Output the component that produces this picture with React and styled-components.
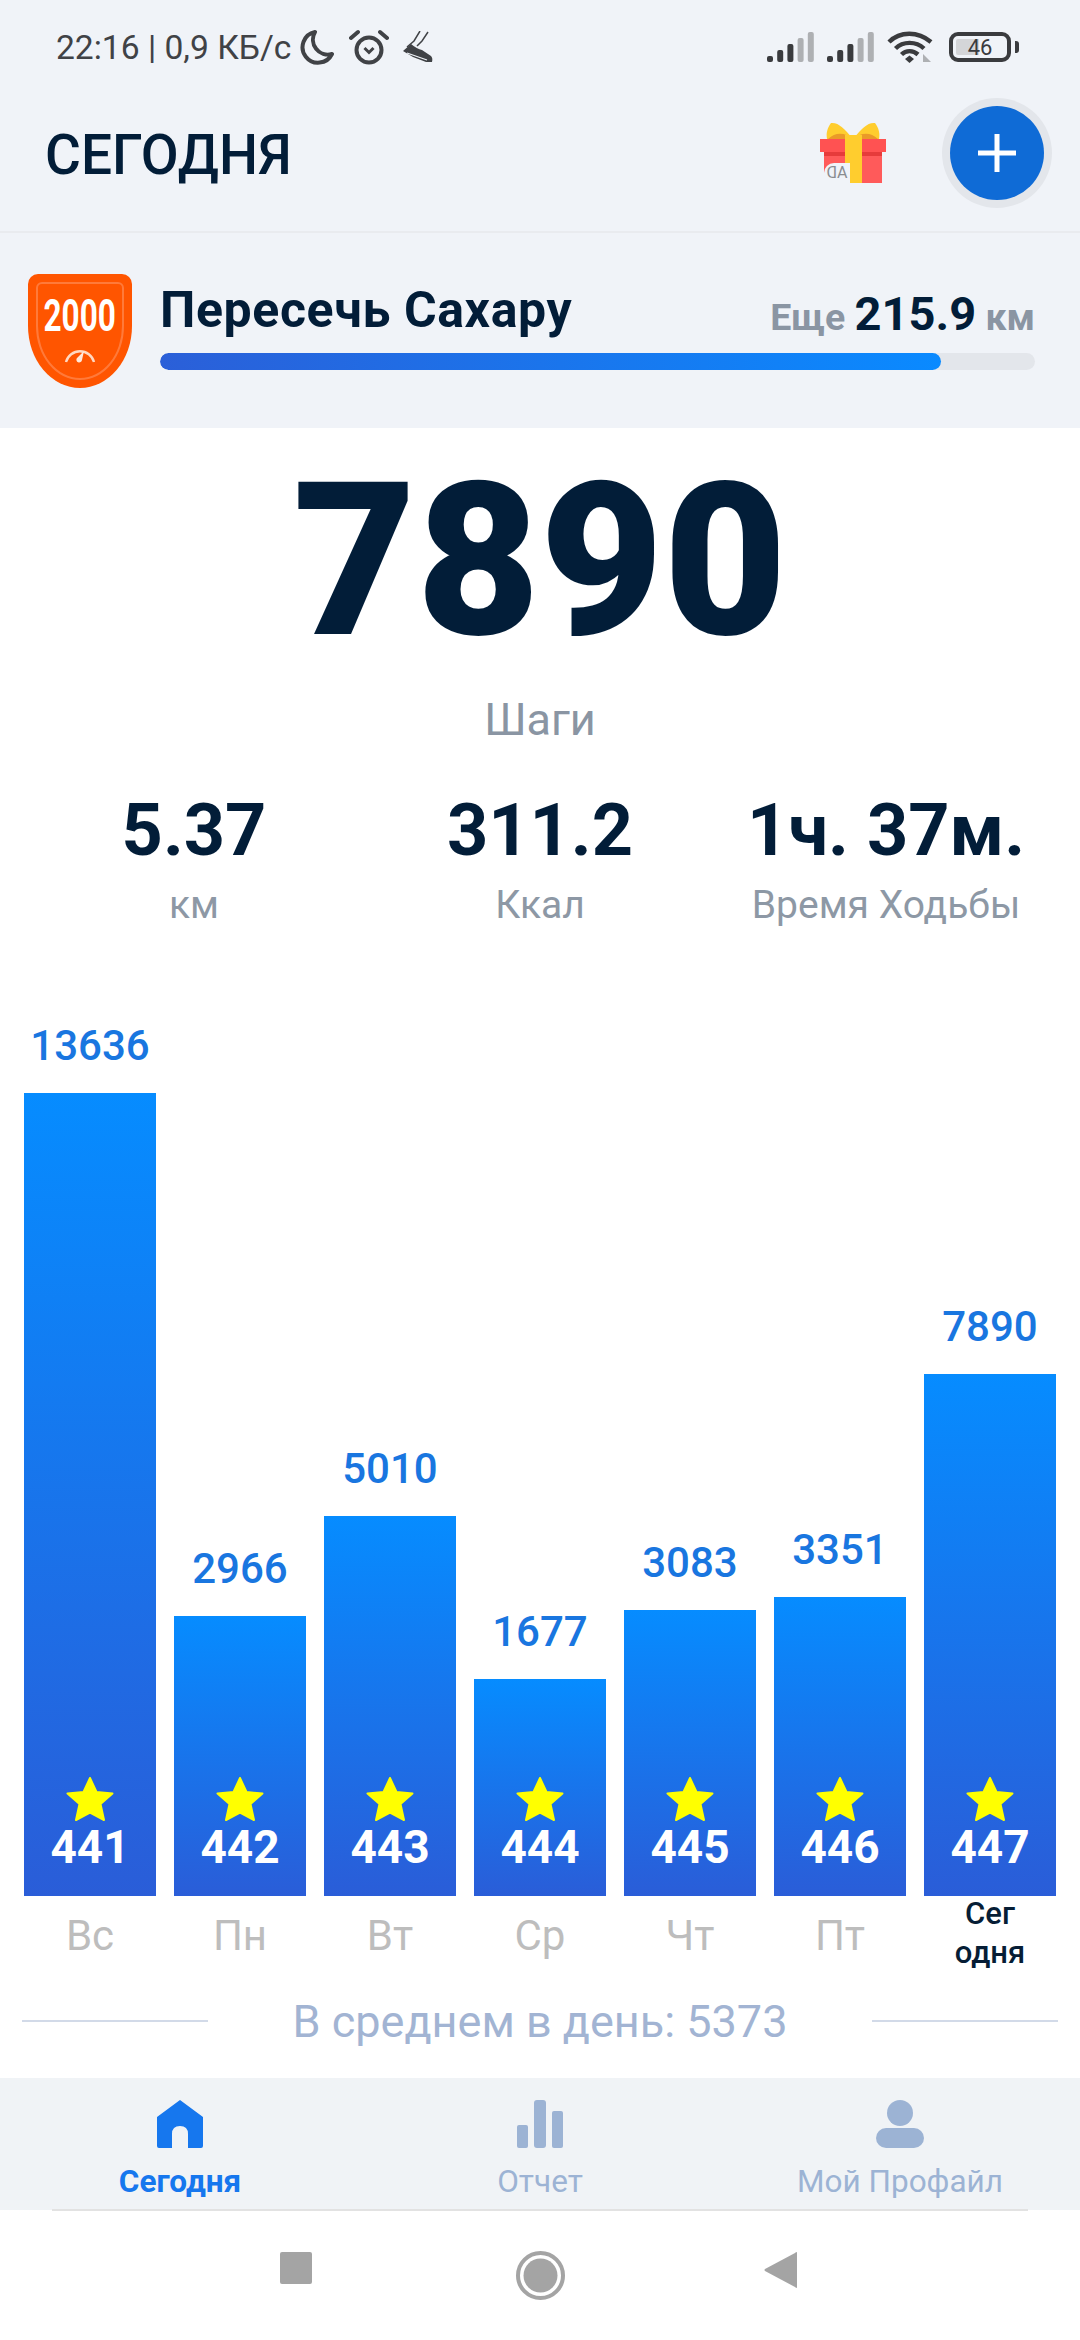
import React from 'react';
import styled, { createGlobalStyle } from 'styled-components';

const GlobalStyle = createGlobalStyle`
  html, body {
    margin: 0;
    padding: 0;
    background: #fff;
    font-family: Roboto, "Noto Sans", sans-serif;
  }
`;

const Screen = styled.div`
  width: 1080px;
  height: 2340px;
  display: flex;
  flex-direction: column;
  overflow: hidden;
  color: #021d38;
`;

const Top = styled.header`
  height: 231px;
  background: #f0f3f8;
  border-bottom: 2px solid #e9ebef;
  box-sizing: content-box;
`;

const StatusBar = styled.div`
  padding: 24px 63px 0 56px;
  display: flex;
  align-items: center;
  justify-content: space-between;
  height: 46px;
`;

const StatusGroup = styled.div`
  display: flex;
  align-items: center;
  gap: ${(p) => p.$gap || 12}px;
`;

const Clock = styled.span`
  font-size: 33.6px;
  color: #404246;
  margin-right: -5px;
  white-space: nowrap;
`;

const BatteryBox = styled.div`
  position: relative;
  width: 62px;
  height: 30px;
  box-sizing: border-box;
  border: 4px solid #3a3b3e;
  border-radius: 9px;
  display: flex;
  align-items: center;
  justify-content: center;
  font-size: 22px;
  color: #3a3b3e;
  margin-right: 6px;
  margin-left: 4px;
  background: linear-gradient(90deg, #d4d5d8 48%, transparent 48%);
  background-clip: content-box;
  padding: 3px;

  &::after {
    content: '';
    position: absolute;
    right: -12px;
    top: 5px;
    width: 4px;
    height: 12px;
    border-radius: 0 3px 3px 0;
    background: #3a3b3e;
  }
`;

const TitleBar = styled.div`
  display: flex;
  align-items: center;
  height: 161px;
  padding: 4px 36px 0 45px;
  box-sizing: border-box;
`;

const PageTitle = styled.h1`
  flex: 1;
  margin: 4px 0 0;
  font-size: 55px;
  font-weight: 500;
  color: #021d38;
`;

const GiftWrap = styled.div`
  position: relative;
  width: 66px;
  height: 61px;
  margin-right: 64px;
`;

const AdMark = styled.span`
  position: absolute;
  left: 4px;
  bottom: 0;
  width: 26px;
  height: 20px;
  background: #f0f3f8;
  border-radius: 0 10px 0 0;
  font-size: 16px;
  line-height: 20px;
  text-align: center;
  color: #8a8c90;
  transform: scaleX(-1);
`;

const AddButton = styled.button`
  width: 94px;
  height: 94px;
  padding: 0;
  border: none;
  border-radius: 50%;
  background: #0f6bd6;
  box-shadow: 0 0 0 8px #e3e6eb;
  display: flex;
  align-items: center;
  justify-content: center;
`;

const Banner = styled.section`
  height: 195px;
  background: #f0f3f8;
  display: flex;
  align-items: flex-start;
  padding: 41px 45px 0 28px;
  box-sizing: border-box;
  gap: 28px;
`;

const Badge = styled.div`
  position: relative;
  flex: none;
  width: 104px;
  height: 114px;
  border-radius: 10px 10px 52px 52px / 10px 10px 62px 62px;
  background: #ff5500;
  display: flex;
  flex-direction: column;
  align-items: center;
  color: #fff;

  &::before {
    content: '';
    position: absolute;
    inset: 8px;
    border: 2px solid #ff7a3a;
    border-radius: 6px 6px 44px 44px / 6px 6px 54px 54px;
  }
`;

const BadgeValue = styled.span`
  margin-top: 22px;
  font-size: 45px;
  line-height: 40px;
  font-weight: 700;
  transform: scaleX(0.7);
`;

const GaugeSlot = styled.div`
  margin-top: 9px;
  line-height: 0;
`;

const BannerBody = styled.div`
  flex: 1;
  display: flex;
  flex-direction: column;
`;

const BannerRow = styled.div`
  display: flex;
  align-items: center;
  justify-content: space-between;
  height: 72px;
  margin-bottom: 7px;
`;

const GoalName = styled.h2`
  margin: 0;
  font-size: 50px;
  font-weight: 700;
  letter-spacing: 0.6px;
  color: #021d38;
`;

const Remaining = styled.div`
  font-size: 37.5px;
  font-weight: 700;
  color: #8a95a3;
  margin-top: 6px;

  b {
    font-size: 47px;
    font-weight: 700;
    color: #021d38;
  }
`;

const Track = styled.div`
  height: 17px;
  border-radius: 9px;
  background: #e3e6eb;
  overflow: hidden;
`;

const Fill = styled.div`
  height: 100%;
  border-radius: 9px;
  background: linear-gradient(90deg, #2b5fd8, #0a8aff);
`;

const Main = styled.main`
  flex: 1;
  display: flex;
  flex-direction: column;
  background: #fff;
`;

const Steps = styled.div`
  margin-top: 23px;
  text-align: center;
  font-size: 213px;
  line-height: 220px;
  font-weight: 900;
  color: #021d38;
`;

const StepsLabel = styled.div`
  margin-top: 24px;
  text-align: center;
  font-size: 45px;
  line-height: 50px;
  color: #8a95a3;
`;

const Stats = styled.div`
  display: grid;
  grid-template-columns: repeat(3, 346px);
  justify-content: center;
  margin-top: 46px;
`;

const Stat = styled.div`
  display: flex;
  flex-direction: column;
  align-items: center;
`;

const StatValue = styled.div`
  font-size: 72px;
  line-height: 80px;
  font-weight: 700;
  white-space: nowrap;
`;

const StatLabel = styled.div`
  font-size: 39px;
  line-height: 48px;
  color: #8d98a5;
  margin-top: 10px;
`;

const Chart = styled.div`
  height: 1041px;
  flex: none;
  display: flex;
  justify-content: space-between;
  align-items: flex-end;
  padding: 0 24px;
`;

const Column = styled.div`
  width: 132px;
  display: flex;
  flex-direction: column;
  align-items: center;
`;

const BarValue = styled.div`
  font-size: 42px;
  line-height: 50px;
  font-weight: 500;
  color: #1976e0;
  margin-bottom: 22px;
`;

const Bar = styled.div`
  align-self: stretch;
  display: flex;
  flex-direction: column;
  justify-content: flex-end;
  align-items: center;
  padding-bottom: 31px;
  box-sizing: border-box;
  background: linear-gradient(180deg, #068cff, #2a5dd8);
  color: #fff;
`;

const BarCount = styled.div`
  font-size: 46px;
  line-height: 36px;
  font-weight: 700;
  margin-top: 7px;
`;

const DaySlot = styled.div`
  height: 74px;
  display: flex;
  align-items: flex-start;
  justify-content: center;
  text-align: center;
`;

const Day = styled.span`
  margin-top: 16px;
  font-size: 42px;
  line-height: 48px;
  color: #bdbdbd;
`;

const TodayLabel = styled.span`
  margin-top: -2px;
  font-size: 31px;
  line-height: 39px;
  font-weight: 500;
  color: #061d35;
`;

const Average = styled.div`
  display: flex;
  align-items: center;
  justify-content: space-between;
  padding: 0 22px;
  margin-top: 26px;
  height: 50px;
`;

const AverageRule = styled.div`
  width: 186px;
  height: 2px;
  background: #d2dae8;
`;

const AverageText = styled.span`
  font-size: 45px;
  color: #a2b4d3;
`;

const TabBar = styled.nav`
  height: 132px;
  background: #f0f3f6;
  display: grid;
  grid-template-columns: repeat(3, 1fr);
  position: relative;

  &::after {
    content: '';
    position: absolute;
    left: 52px;
    right: 52px;
    bottom: -1px;
    height: 2px;
    background: #e2e2e2;
  }
`;

const Tab = styled.div`
  display: flex;
  flex-direction: column;
  align-items: center;
  padding-top: 22px;
  font-size: 31.5px;
  font-weight: ${(p) => (p.$active ? 700 : 400)};
  color: ${(p) => (p.$active ? '#1677ee' : '#9cb3d4')};
`;

const TabLabel = styled.span`
  margin-top: 14px;
  line-height: 40px;
`;

const SystemNav = styled.div`
  height: 130px;
  background: #fff;
  display: flex;
  align-items: flex-start;
  padding: 41px 0 0 280px;
  box-sizing: border-box;
  gap: 204px;
`;

const BackSlot = styled.div`
  margin-left: -5px;
  line-height: 0;
`;

const Moon = () => (
  <svg width="35" height="36" viewBox="0 0 35 36" fill="none">
    <path d="M15 3 A15.5 15.5 0 1 0 32 25 A15 15 0 0 1 15 3 Z" stroke="#404246" strokeWidth="4" strokeLinejoin="round" />
  </svg>
);

const Alarm = () => (
  <svg width="40" height="36" viewBox="0 0 40 36" fill="none" stroke="#404246">
    <circle cx="20" cy="21" r="12.5" strokeWidth="4" />
    <path d="M15.5 19 L20 23.5 L24.5 19" strokeWidth="3" />
    <path d="M2 9 L9 3 M38 9 L31 3" strokeWidth="4" strokeLinecap="round" />
  </svg>
);

const Shoe = () => (
  <svg width="30" height="32" viewBox="0 0 30 32" fill="none">
    <path d="M0 20 L8 13 Q14 18 19 19 L28 25 Q30 27 29 31 L23 31 L10 26 Z" fill="#404246" />
    <path d="M4 16 L11 10 L17 0 M14 15 L19 10 L25 1" stroke="#404246" strokeWidth="1.5" />
    <path d="M4 22 L24 29" stroke="#f0f3f8" strokeWidth="1.3" />
  </svg>
);

const Signal = () => (
  <svg width="48" height="30" viewBox="0 0 48 30">
    {[6, 12, 18, 24, 30].map((h, i) => (
      <rect key={h} x={i * 10.2} y={30 - h} width="6" height={h} rx="2" fill={i < 3 ? '#3a3b3e' : '#aeb0b3'} />
    ))}
  </svg>
);

const Wifi = () => (
  <svg width="46" height="34" viewBox="0 0 46 34" fill="none" stroke="#3a3b3e" strokeWidth="4.4">
    <path d="M2 12 C13 1 31 1 44 12" />
    <path d="M8.5 18.5 C16 11 29 11 37 18.5" />
    <path d="M14.5 24.5 C19 20 26 20 31 24.5" />
    <path d="M18 29 L22.5 25.5 L27 29 L22.5 33 Z" fill="#3a3b3e" stroke="none" />
    <path d="M36 24 L36 32 L44 32 Z" fill="#aeb0b3" stroke="none" />
  </svg>
);

const Gift = () => (
  <svg width="66" height="61" viewBox="0 0 66 61">
    <path d="M33 17 C24 6 18 0 11 1 C7 6 6 12 7 17 Z" fill="#ffcd2e" />
    <path d="M33 17 C42 6 48 0 55 1 C59 6 60 12 59 17 Z" fill="#ffcd2e" />
    <path d="M33 17 C26 11 16 9 8 17 Z M33 17 C40 11 50 9 58 17 Z" fill="#ea9a28" />
    <rect x="4" y="30" width="58" height="31" fill="#ff5a5a" />
    <rect x="4" y="30" width="58" height="4" fill="#e63b3b" />
    <rect y="17" width="66" height="13" fill="#ff5252" />
    <rect x="25" y="13" width="17" height="48" fill="#ffcd2e" />
  </svg>
);

const Plus = () => (
  <svg width="40" height="40" viewBox="0 0 40 40">
    <path d="M20 1 V39 M1 20 H39" stroke="#fff" strokeWidth="5" />
  </svg>
);

const Gauge = () => (
  <svg width="32" height="18" viewBox="0 0 32 18" fill="none">
    <path d="M2 17 A14.5 14.5 0 0 1 30 17" stroke="#ffd9c2" strokeWidth="2.4" />
    <path d="M20 6 L13 13 A2.8 2.8 0 1 0 18 15 Z" fill="#ffe9dc" />
  </svg>
);

const Star = () => (
  <svg width="48" height="45" viewBox="0 0 48 45">
    <path d="M24 1 L30.5 15 L46.5 16.5 L34.5 27 L38 43 L24 35.5 L10 43 L13.5 27 L1.5 16.5 L17.5 15 Z" fill="#ffff00" stroke="#ffff00" strokeWidth="2" strokeLinejoin="round" />
  </svg>
);

const HomeIcon = () => (
  <svg width="46" height="48" viewBox="0 0 46 48">
    <path d="M23 0 L46 17 V46 Q46 48 44 48 H31 V34 Q31 26 23 26 Q15 26 15 34 V48 H2 Q0 48 0 46 V17 Z" fill="#1677ee" />
  </svg>
);

const ReportIcon = () => (
  <svg width="46" height="48" viewBox="0 0 46 48" fill="#9cb3d4">
    <rect y="25" width="11" height="23" rx="2" />
    <rect x="17" width="12" height="48" rx="3" />
    <rect x="35" y="11" width="11" height="37" rx="2" />
  </svg>
);

const ProfileIcon = () => (
  <svg width="48" height="48" viewBox="0 0 48 48" fill="#9cb3d4">
    <ellipse cx="24" cy="13" rx="13" ry="13" />
    <rect y="28" width="48" height="20" rx="10" />
  </svg>
);

const NavSquare = () => (
  <svg width="32" height="33" viewBox="0 0 32 33">
    <rect y="1" width="32" height="32" rx="2" fill="#a4a4a4" />
  </svg>
);

const NavCircle = () => (
  <svg width="49" height="49" viewBox="0 0 49 49" fill="none">
    <circle cx="24.5" cy="24.5" r="22.5" stroke="#a4a4a4" strokeWidth="4" />
    <circle cx="24.5" cy="24.5" r="17" fill="#a4a4a4" />
  </svg>
);

const NavBack = () => (
  <svg width="33" height="38" viewBox="0 0 33 38">
    <path d="M33 2 V36 Q33 38 31 36 L1 20 Q0 19 1 18 L31 2 Q33 0 33 2 Z" fill="#a4a4a4" />
  </svg>
);

const days = [
  { day: 'Вс', steps: 13636, stars: 441 },
  { day: 'Пн', steps: 2966, stars: 442 },
  { day: 'Вт', steps: 5010, stars: 443 },
  { day: 'Ср', steps: 1677, stars: 444 },
  { day: 'Чт', steps: 3083, stars: 445 },
  { day: 'Пт', steps: 3351, stars: 446 },
  { day: 'Сег одня', steps: 7890, stars: 447, today: true },
];

// bars are not proportional from zero: fitted from the tallest and shortest ones
const barHeight = (steps) => Math.round(135 + steps * 0.049);

const App = () => {
  return (
    <Screen>
      <GlobalStyle />
      <Top>
        <StatusBar>
          <StatusGroup $gap={14}>
            <Clock>22:16 | 0,9 КБ/с</Clock>
            <Moon />
            <Alarm />
            <Shoe />
          </StatusGroup>
          <StatusGroup>
            <Signal />
            <Signal />
            <Wifi />
            <BatteryBox>46</BatteryBox>
          </StatusGroup>
        </StatusBar>
        <TitleBar>
          <PageTitle>СЕГОДНЯ</PageTitle>
          <GiftWrap>
            <Gift />
            <AdMark>AD</AdMark>
          </GiftWrap>
          <AddButton aria-label="add">
            <Plus />
          </AddButton>
        </TitleBar>
      </Top>

      <Banner>
        <Badge>
          <BadgeValue>2000</BadgeValue>
          <GaugeSlot>
            <Gauge />
          </GaugeSlot>
        </Badge>
        <BannerBody>
          <BannerRow>
            <GoalName>Пересечь Сахару</GoalName>
            <Remaining>
              Еще <b>215.9</b> км
            </Remaining>
          </BannerRow>
          <Track>
            <Fill style={{ width: `${(781 / 875) * 100}%` }} />
          </Track>
        </BannerBody>
      </Banner>

      <Main>
        <Steps>7890</Steps>
        <StepsLabel>Шаги</StepsLabel>
        <Stats>
          <Stat>
            <StatValue>5.37</StatValue>
            <StatLabel>км</StatLabel>
          </Stat>
          <Stat>
            <StatValue>311.2</StatValue>
            <StatLabel>Ккал</StatLabel>
          </Stat>
          <Stat>
            <StatValue>1ч. 37м.</StatValue>
            <StatLabel>Время Ходьбы</StatLabel>
          </Stat>
        </Stats>
        <Chart>
          {days.map((d) => (
            <Column key={d.stars}>
              <BarValue>{d.steps}</BarValue>
              <Bar style={{ height: barHeight(d.steps) }}>
                <Star />
                <BarCount>{d.stars}</BarCount>
              </Bar>
              <DaySlot>
                {d.today ? <TodayLabel>Сег<br />одня</TodayLabel> : <Day>{d.day}</Day>}
              </DaySlot>
            </Column>
          ))}
        </Chart>
        <Average>
          <AverageRule />
          <AverageText>В среднем в день: 5373</AverageText>
          <AverageRule />
        </Average>
      </Main>

      <TabBar>
        <Tab $active>
          <HomeIcon />
          <TabLabel>Сегодня</TabLabel>
        </Tab>
        <Tab>
          <ReportIcon />
          <TabLabel>Отчет</TabLabel>
        </Tab>
        <Tab>
          <ProfileIcon />
          <TabLabel>Мой Профайл</TabLabel>
        </Tab>
      </TabBar>
      <SystemNav>
        <NavSquare />
        <NavCircle />
        <BackSlot>
          <NavBack />
        </BackSlot>
      </SystemNav>
    </Screen>
  );
};

export default App;
